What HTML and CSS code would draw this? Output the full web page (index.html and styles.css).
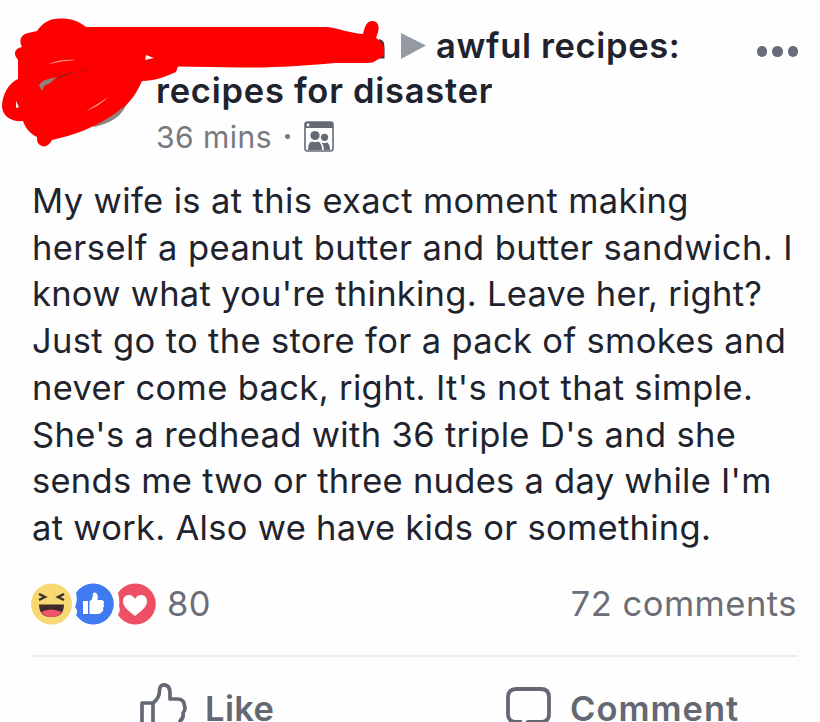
FILE: index.html
```html
<!DOCTYPE html>
<html lang="en">
<head>
<meta charset="utf-8">
<title>Post</title>
<link rel="stylesheet" href="styles.css">
</head>
<body>
<article class="post">
  <header class="header">
    <div class="heading">
      <h1 class="title"><svg class="arrow" viewBox="0 0 25 26"><path d="M0 0L25 12.5L0 26Z" fill="#949ba3"/></svg><span class="t1">awful recipes:</span><br><span class="t2">recipes for disaster</span></h1>
      <div class="meta"><span class="time">36 mins</span><span class="dot"></span>
        <svg class="group" viewBox="0 0 30 31"><rect x="1" y="1" width="28" height="29" rx="2.5" fill="#fff" stroke="#646b75" stroke-width="1.6"/><path d="M1 7V3Q1 1 3 1H27Q29 1 29 3V7Z" fill="#646b75"/><circle cx="4" cy="4" r="1.4" fill="#fff"/><circle cx="11" cy="14.5" r="4.6" fill="#646b75"/><circle cx="20.5" cy="16.3" r="3.6" fill="#646b75"/><path d="M4 29Q4 21 8 20.5Q11 22 14 20.5Q18 22 18 29ZM19.8 29Q19.8 24 17.5 21.5Q20.5 22.8 23 21.2Q26 23 26 29Z" fill="#646b75"/></svg>
      </div>
    </div>
    <div class="more"><i></i><i></i><i></i></div>
    <svg class="scribble" viewBox="0 0 400 160">
      <path d="M379 39Q385 40 384.5 48V58.5H379Z" fill="#32323f"/>
      <path d="M127 103Q121 121 94 127L91 123L110 109Z" fill="#8f8279"/>
      <path d="M37 31C42 23 50 18.5 60 18.5C71 18.5 79 21 86 27H328C340 29 350 33 363 34C365 26 367 21 372 21C379 21 380 28 377 35L376 38C383 42 385 47 384 54C382 59 377 59 374 62Q371 63 367 63H335C300 66 270 68 240 67.5L178 66.5L176 72C165 77 154 81 142 81C137 92 132 100 125 106C106 121 88 130 68 136L52 140C49 146 44 148 40 145C37 143 37 140 37 137C29 133 25 127 23 121C12 122 3 117 2 107C2 94 9 83 18 79V60C13 54 14 49 22 47C19 41 20 35 28 33Z" fill="#fe0000"/>
      <path d="M39 85C44 78 51 79 57 77L50 83L44 86L42 91Z" fill="#8e8178"/>
      <path d="M57 77Q68 72 80 71.5Q69 73 57 79Z" fill="#9b1815"/>
      <path d="M49 64Q61 59 76 60Q62 60.5 49 64ZM86 111Q101 105 108 97Q100 103 86 111Z" fill="#ffb9b0"/>
      <path d="M146 55L154 58L145 60ZM16 101L19 107L16 108Z" fill="#fff4f0"/>
      <path d="M79 71L87 70" stroke="#a61512"/>
    </svg>
  </header>
  <p class="body"><span class="l1">My wife is at this exact moment making</span><br><span class="l2">herself a peanut butter and butter sandwich. I</span><br><span class="l3">know what you're thinking. Leave her, right?</span><br><span class="l4">Just go to the store for a pack of smokes and</span><br><span class="l5">never come back, right. It's not that simple.</span><br><span class="l6">She's a redhead with 36 triple D's and she</span><br><span class="l7">sends me two or three nudes a day while I'm</span><br><span class="l8">at work. Also we have kids or something.</span></p>
  <div class="stats">
    <svg class="reactions" viewBox="0 0 126 44">
      <circle cx="20.5" cy="22" r="20.5" fill="#f8d872"/>
      <path d="M8 12L14 15L8 18M33 12L27 15L33 18" fill="none" stroke="#3b2f2b" stroke-width="2.4"/>
      <path d="M8 22.500H33Q33 35 20.5 35Q8 35 8 22.500Z" fill="#40282d"/>
      <path d="M10 30Q20 25 31 30Q27 35 20.5 35Q14 35 10 30Z" fill="#f05266"/>
      <path d="M45 11A20.5 20.5 0 1 1 45 33Q48 29 44 25Q47 19 45 11Z" fill="#3f7af0"/>
      <path d="M52 19H57V32H52ZM58.500 19Q62 18 62 11Q66 9 67 15L66.500 18H71Q74 19 72.500 22Q74 24 72 26Q73 29 70.500 30Q70 32 67 32H58.500Z" fill="#fff"/>
      <path d="M87 11A20.500 20.500 0 1 1 87 33Q90 29 88 24Q89 17 87 11Z" fill="#ef4f65"/>
      <path d="M104 34C98 29 92 25 92 19.500C92 12 101 11 104 17C107 11 116 12 116 19.500C116 25 110 29 104 34Z" fill="#fff"/>
    </svg>
    <span class="count">80</span><span class="comments">72 comments</span>
  </div>
  <footer class="actions">
    <div class="action like"><svg class="thumb" viewBox="0 0 48 48"><path d="M3 20H14V46H3ZM14 20Q20.500 15 20.500 8Q20.500 1.800 25 1.800Q31 2 31 10V16H38Q45.500 16 45.500 23Q47 27 44 30Q45 35 41 38Q41 46 33 46H14" fill="none" stroke="#646873" stroke-width="3.700" stroke-linejoin="round"/></svg><span>Like</span></div>
    <div class="action comment"><svg class="bubble" viewBox="0 0 46 44"><path d="M14 35H10Q2 35 2 27V10Q2 2 10 2H35Q43 2 43 10V27Q43 35 35 35H22L14 42Z" fill="none" stroke="#646873" stroke-width="3.800"/></svg><span>Comment</span></div>
  </footer>
</article>
</body>
</html>
```
FILE: styles.css
```css
* { box-sizing: border-box; }
html, body { margin: 0; height: 722px; overflow: hidden; background: #fefefe; }
body { font-family: Inter, sans-serif; color: #20232d; }
.post { height: 722px; padding: 24px 22px 0 32px; overflow: hidden; }
.header { position: relative; display: flex; height: 154px; padding-left: 124px; }
.heading { flex: 1; }
.title { margin: 0; font-size: 34.5px; line-height: 44.5px; font-weight: 600; white-space: nowrap; }
.t1 { letter-spacing: .65px; }
.t2 { letter-spacing: .75px; }
.arrow { width: 25px; height: 26px; margin: 0 10px 0 245px; vertical-align: -1px; }
.meta { display: flex; align-items: center; height: 47px; font-size: 30px; letter-spacing: .5px; color: #777980; }
.dot { width: 5px; height: 5px; border-radius: 50%; background: #777980; margin: 0 14px 0 13px; }
.group { width: 30px; height: 31px; }
.more { display: flex; gap: 5px; padding-top: 22px; }
.more i { width: 10.5px; height: 10.5px; border-radius: 50%; background: #686b78; }
.scribble { position: absolute; left: -32px; top: -24px; width: 400px; height: 160px; }
.body { margin: 0; height: 374px; font-size: 34.5px; line-height: 46.7px; white-space: nowrap; }
.l1 { letter-spacing: .38px; }
.l2 { letter-spacing: .43px; }
.l3 { letter-spacing: .27px; }
.l4 { letter-spacing: .35px; }
.l5 { letter-spacing: .36px; }
.l6 { letter-spacing: .35px; }
.l7 { letter-spacing: .27px; }
.l8 { letter-spacing: .30px; }
.stats { display: flex; align-items: center; height: 103px; color: #6b6e76; font-size: 34.5px; }
.reactions { width: 126px; height: 44px; margin-left: -1px; }
.count { margin-left: 10px; letter-spacing: .3px; }
.comments { margin-left: auto; margin-right: 1px; letter-spacing: .5px; }
.actions { display: flex; border-top: 2px solid #ececee; width: 766px; padding-top: 26px; color: #646873; font-size: 34.5px; font-weight: 600; line-height: 51px; }
.action { display: flex; width: 366px; padding-left: 107px; }
.like span { letter-spacing: .4px; }
.comment span { letter-spacing: 1px; }
.comment { padding-left: 108px; }
.thumb { width: 48px; height: 48px; margin-right: 18px; }
.bubble { width: 46px; height: 44px; margin: 4px 18px 0 0; }
```
